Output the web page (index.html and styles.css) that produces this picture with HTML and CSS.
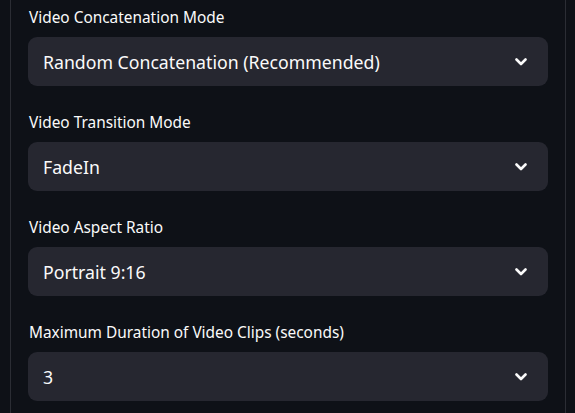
FILE: index.html
```html
<!DOCTYPE html>
<html>
<head>
<meta charset="utf-8">
<link rel="stylesheet" href="styles.css">
</head>
<body>
<div class="panel">
  <div class="field">
    <div class="label">Video Concatenation Mode</div>
    <div class="select"><span class="value">Random Concatenation (Recommended)</span><svg class="chev" viewBox="0 0 12 8" width="12" height="8"><polyline points="1.5,1.5 6,6 10.5,1.5" fill="none" stroke="#fafafa" stroke-width="2.6" stroke-linecap="round" stroke-linejoin="round"/></svg></div>
  </div>
  <div class="field">
    <div class="label">Video Transition Mode</div>
    <div class="select"><span class="value">FadeIn</span><svg class="chev" viewBox="0 0 12 8" width="12" height="8"><polyline points="1.5,1.5 6,6 10.5,1.5" fill="none" stroke="#fafafa" stroke-width="2.6" stroke-linecap="round" stroke-linejoin="round"/></svg></div>
  </div>
  <div class="field">
    <div class="label">Video Aspect Ratio</div>
    <div class="select"><span class="value">Portrait 9:16</span><svg class="chev" viewBox="0 0 12 8" width="12" height="8"><polyline points="1.5,1.5 6,6 10.5,1.5" fill="none" stroke="#fafafa" stroke-width="2.6" stroke-linecap="round" stroke-linejoin="round"/></svg></div>
  </div>
  <div class="field">
    <div class="label">Maximum Duration of Video Clips (seconds)</div>
    <div class="select"><span class="value">3</span><svg class="chev" viewBox="0 0 12 8" width="12" height="8"><polyline points="1.5,1.5 6,6 10.5,1.5" fill="none" stroke="#fafafa" stroke-width="2.6" stroke-linecap="round" stroke-linejoin="round"/></svg></div>
  </div>
</div>
</body>
</html>
```
FILE: styles.css
```css
html, body {
  margin: 0;
  padding: 0;
  background: #0e1117;
  height: 100%;
  overflow: hidden;
}
body {
  font-family: "Noto Sans", "Liberation Sans", sans-serif;
  color: #fafafa;
}
.panel {
  margin: 0 9px 0 10px;
  border-left: 1px solid #2b2d34;
  border-right: 1px solid #2b2d34;
  padding: 5px 17px 0 17px;
  display: flex;
  flex-direction: column;
  gap: 24px;
  min-height: 100%;
  box-sizing: border-box;
}
.field {
  display: flex;
  flex-direction: column;
  gap: 7px;
}
.label {
  font-size: 15.4px;
  line-height: 24px;
  padding: 1px 0 0 1px;
}
.select {
  height: 49px;
  background: #262730;
  border-radius: 9px;
  display: flex;
  align-items: center;
  justify-content: space-between;
  padding: 0 21px 0 15px;
}
.value {
  font-size: 17.7px;
}
.chev {
  display: block;
}
```
